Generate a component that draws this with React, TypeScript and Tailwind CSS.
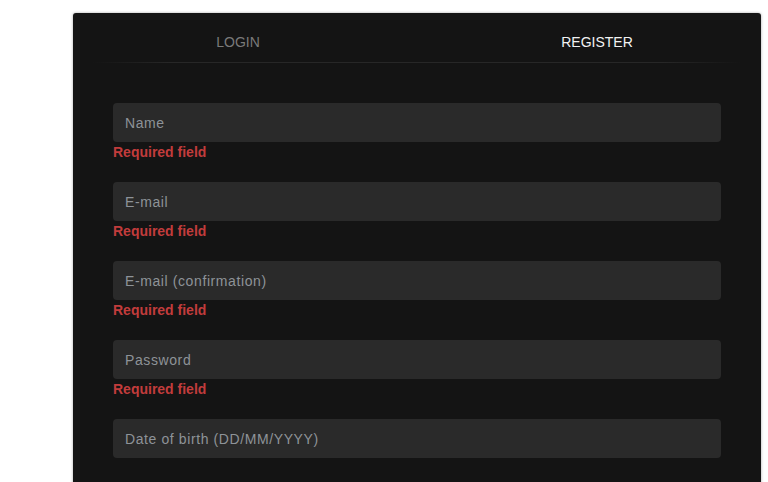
import React from "react";

const fields = [
  { placeholder: "Name", error: true },
  { placeholder: "E-mail", error: true },
  { placeholder: "E-mail (confirmation)", error: true },
  { placeholder: "Password", error: true, type: "password" },
  { placeholder: "Date of birth (DD/MM/YYYY)", error: false },
];

const App: React.FC = () => {
  return (
    <div
      className="h-[482px] overflow-hidden bg-white pl-[73px] pt-[13px]"
      style={{ fontFamily: '"Liberation Sans", Arial, sans-serif' }}
    >
      <div className="w-[688px] min-h-[520px] rounded-[3px] bg-[#141414] shadow-[0_0_3px_rgba(0,0,0,0.35)]">
        {/* tabs */}
        <div className="flex pt-[20px] pb-[11px] text-[14px] leading-[18px]">
          <button className="ml-[65px] w-[200px] text-center text-[#7a7a7a]">
            LOGIN
          </button>
          <button className="ml-[159px] w-[200px] text-center text-[#f2f2f2]">
            REGISTER
          </button>
        </div>
        <div className="mx-[20px] h-px bg-[linear-gradient(to_right,transparent,#272727_12%,#272727_88%,transparent)]" />

        {/* form */}
        <form className="px-[40px] pt-[40px]">
          {fields.map((f) => (
            <div key={f.placeholder} className="mb-[20px]">
              <input
                type={f.type ?? "text"}
                placeholder={f.placeholder}
                className="block h-[39px] w-full rounded-[4px] bg-[#2a2a2a] px-[12px] text-[14px] tracking-[0.6px] text-[#ddd] placeholder:text-[#8e9398] outline-none"
              />
              {f.error ? (
                <div className="text-[14px] font-bold leading-[20px] text-[#c23c3c]">
                  Required field
                </div>
              ) : (
                <div className="h-[20px]" />
              )}
            </div>
          ))}
        </form>
      </div>
    </div>
  );
};

export default App;
